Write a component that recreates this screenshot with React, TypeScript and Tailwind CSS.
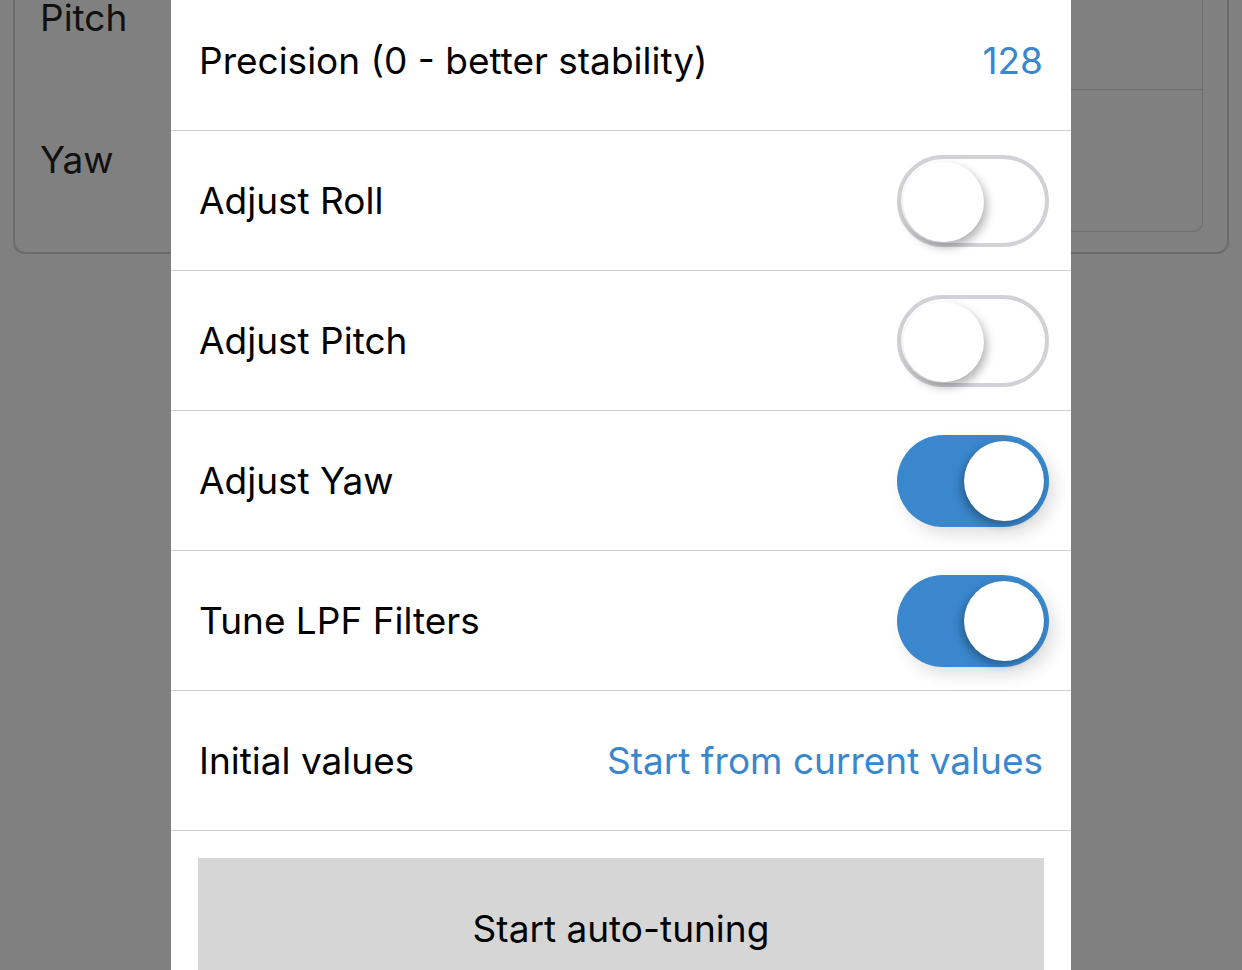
import React from "react";

const font = { fontFamily: "Inter, 'Noto Sans', sans-serif" };

function Toggle({ on }: { on: boolean }) {
  return on ? (
    <div className="relative h-[92px] w-[152px] rounded-full bg-[#3a87cd] shadow-[6px_8px_16px_rgba(0,0,0,0.12)]">
      <div className="absolute right-[5px] top-[6px] h-[80px] w-[80px] rounded-full bg-white shadow-[-3px_4px_8px_rgba(0,0,0,0.3)]" />
    </div>
  ) : (
    <div className="relative h-[92px] w-[152px] rounded-full border-[4px] border-[#d2d2d6] bg-white">
      <div className="absolute left-[2px] top-[3px] h-[80px] w-[81px] rounded-full bg-white shadow-[3px_5px_10px_rgba(0,0,0,0.3)]" />
    </div>
  );
}

function Row({ label, children }: { label: string; children?: React.ReactNode }) {
  return (
    <div className="flex h-[140px] items-center justify-between border-b border-[#cfcfcf] pl-[28px] pr-[22px]">
      <span className="text-[37px] leading-none text-black">{label}</span>
      {children}
    </div>
  );
}

export default function App() {
  return (
    <div className="relative h-[970px] w-[1242px] overflow-hidden bg-[#808080]" style={font}>
      {/* background page */}
      <div className="-mt-[20px] mx-[13px] h-[274px] rounded-b-[12px] border-x-2 border-b-2 border-[#6b6b6b] flex">
        <div className="flex w-[200px] flex-col pl-[25px] pt-[15px] text-[37px] leading-none text-[#111]">
          <span className="pt-[4px]">Pitch</span>
          <span className="pt-[105px]">Yaw</span>
        </div>
        <div className="flex-1" />
        <div className="mr-[24px] h-[252px] w-[400px] rounded-b-[10px] border-x border-b border-[#6e6e6e] flex flex-col">
          <div className="h-[110px] border-b border-[#6e6e6e]" />
        </div>
      </div>

      {/* modal */}
      <div className="absolute left-[171px] top-[-9px] w-[900px] bg-white">
        <div className="flex h-[140px] items-center justify-between border-b border-[#cfcfcf] px-[28px]">
          <span className="text-[37px] leading-none text-black">Precision (0 - better stability)</span>
          <span className="text-[37px] leading-none text-[#3a87cd]">128</span>
        </div>
        <Row label="Adjust Roll"><Toggle on={false} /></Row>
        <Row label="Adjust Pitch"><Toggle on={false} /></Row>
        <Row label="Adjust Yaw"><Toggle on={true} /></Row>
        <Row label="Tune LPF Filters"><Toggle on={true} /></Row>
        <div className="flex h-[140px] items-center justify-between border-b border-[#cfcfcf] px-[28px]">
          <span className="text-[37px] leading-none text-black">Initial values</span>
          <span className="text-[37px] leading-none text-[#3a87cd]">Start from current values</span>
        </div>
        <div className="px-[27px] pt-[27px] pb-[40px]">
          <div className="flex h-[140px] items-center justify-center bg-[#d6d6d6] text-[37px] leading-none text-black">
            Start auto-tuning
          </div>
        </div>
      </div>
    </div>
  );
}
